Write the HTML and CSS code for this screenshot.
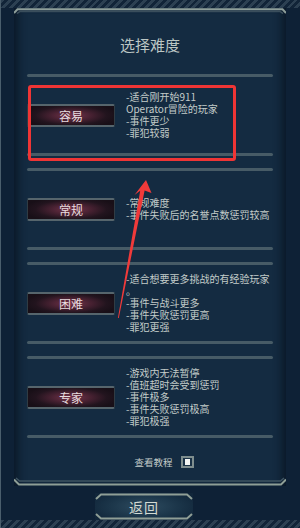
FILE: index.html
```html
<!DOCTYPE html>
<html lang="zh">
<head>
<meta charset="utf-8">
<link rel="stylesheet" href="styles.css">
</head>
<body>
<div class="screen">
  <div class="stripe"></div>
  <div class="panel">
    <svg class="frame-top" width="272" height="6" viewBox="0 0 272 6">
      <polyline points="3,5.5 6,3.5 266,3.5 269,5.5" fill="none" stroke="#3a4e5c" stroke-width="1.5"/>
      <polyline points="0,5 3.5,1.2 268.5,1.2 272,5" fill="none" stroke="#8e9e9a" stroke-width="2"/>
    </svg>
    <h1 class="title">选择难度</h1>
    <div class="modes">
      <section class="mode">
        <div class="mode-body">
          <div class="mode-btn">容易</div>
          <div class="mode-desc">-适合刚开始911<br>Operator冒险的玩家<br>-事件更少<br>-罪犯较弱</div>
        </div>
      </section>
      <section class="mode">
        <div class="mode-body">
          <div class="mode-btn">常规</div>
          <div class="mode-desc">-常规难度<br>-事件失败后的名誉点数惩罚较高</div>
        </div>
      </section>
      <section class="mode">
        <div class="mode-body">
          <div class="mode-btn">困难</div>
          <div class="mode-desc">-适合想要更多挑战的有经验玩家<br>。<br>-事件与战斗更多<br>-事件失败惩罚更高<br>-罪犯更强</div>
        </div>
      </section>
      <section class="mode">
        <div class="mode-body">
          <div class="mode-btn">专家</div>
          <div class="mode-desc">-游戏内无法暂停<br>-值班超时会受到惩罚<br>-事件极多<br>-事件失败惩罚极高<br>-罪犯极强</div>
        </div>
      </section>
    </div>
    <div class="tutorial">
      <span class="tutorial-label">查看教程</span>
      <span class="check"></span>
    </div>
    <svg class="frame-bottom" width="272" height="9" viewBox="0 0 272 9">
      <polyline points="2,1 5.5,4 266.5,4 270,1" fill="none" stroke="#3f5462" stroke-width="1.5"/>
      <polyline points="0,2.5 5,7.5 267,7.5 272,2.5" fill="none" stroke="#8e9e96" stroke-width="2"/>
    </svg>
  </div>
  <div class="back-row">
    <button class="back">
      <svg class="back-frame" width="98" height="27" viewBox="0 0 98 27">
        <polyline points="1,6 6,1.5 92,1.5 97,6" fill="none" stroke="#8f9e96" stroke-width="2"/>
        <polyline points="1,21 6,25.5 92,25.5 97,21" fill="none" stroke="#8f9e96" stroke-width="2"/>
      </svg>
      <span class="back-label">返回</span>
    </button>
  </div>
  <div class="stripe"></div>

  <div class="highlight"></div>
  <svg class="arrow" width="300" height="528" viewBox="0 0 300 528">
    <polygon points="145,180 150.5,193 143.6,190.5 117.8,318 116.9,318 139.2,190.8 133.5,195" fill="#f03a3a"/>
  </svg>
</div>
</body>
</html>
```

FILE: styles.css
```css
* { box-sizing: border-box; }

html, body {
  margin: 0;
  padding: 0;
  background: #0e2136;
}

.screen {
  position: relative;
  width: 300px;
  height: 528px;
  overflow: hidden;
  background: #0e2136;
  border-left: 1px solid #4a5e6c;
  display: flex;
  flex-direction: column;
  font-family: "Noto Sans CJK SC", "Noto Sans", sans-serif;
}

.stripe {
  height: 8px;
  flex: none;
  background: repeating-linear-gradient(135deg, #2c4052 0 2.8px, #112438 2.8px 5.6px);
}

.panel {
  flex: none;
  height: 478px;
  margin: 0 13px;
  width: 272px;
  background: #142b41;
  box-shadow: inset 8px 0 8px -4px rgba(6, 16, 28, 0.7), inset -8px 0 8px -4px rgba(6, 16, 28, 0.7);
  display: flex;
  flex-direction: column;
}

.frame-top, .frame-bottom {
  display: block;
  flex: none;
}

.title {
  margin: 21px 0 19px;
  height: 20px;
  line-height: 20px;
  font-size: 15px;
  font-weight: normal;
  text-align: center;
  color: #bcc6c4;
}

.modes {
  padding: 0 13px;
  display: flex;
  flex-direction: column;
  gap: 12px;
}

.mode::before,
.mode::after {
  content: "";
  display: block;
  height: 3px;
  border-radius: 2px;
  background: #475b66;
}

.mode-body {
  height: 76px;
  display: flex;
  align-items: center;
  gap: 11px;
}

.mode-btn {
  flex: none;
  width: 88px;
  height: 23px;
  display: flex;
  align-items: center;
  justify-content: center;
  font-size: 12px;
  color: #e8dcdf;
  border: 1px solid #303c44;
  border-top: 2px solid #56656c;
  border-bottom: 2px solid #56656c;
  border-radius: 2px;
  background: radial-gradient(ellipse 55% 65% at 50% 50%, #76354b 0%, #4a2233 40%, #22141e 75%, #180f17 100%);
}

.mode-desc {
  width: 152px;
  font-size: 10px;
  line-height: 12px;
  color: #c3cbc9;
  white-space: nowrap;
}

.tutorial {
  margin-top: 17px;
  height: 14px;
  display: flex;
  align-items: center;
  justify-content: center;
  gap: 8px;
  padding-left: 28px;
}

.tutorial-label {
  font-size: 9.5px;
  color: #c3cbc9;
}

.check {
  position: relative;
  width: 13px;
  height: 12px;
  border: 2px solid #7f8e8e;
  background: #1b3246;
}

.check::after {
  content: "";
  position: absolute;
  left: 2px;
  top: 1px;
  width: 5px;
  height: 6px;
  background: #f4f6f4;
}

.frame-bottom {
  margin-top: 8px;
}

.back-row {
  flex: none;
  margin-top: 7px;
  height: 27px;
  padding-left: 94px;
}

.back {
  position: relative;
  width: 98px;
  height: 27px;
  padding: 0;
  border: none;
  background: radial-gradient(ellipse 60% 70% at 50% 50%, #2e4c60 0%, #1b3549 60%, #11263a 100%);
  font-family: "Noto Sans CJK SC", "Noto Sans", sans-serif;
  font-size: 14px;
  color: #d3dbd3;
  display: flex;
  align-items: center;
  justify-content: center;
}

.back-frame {
  position: absolute;
  left: 0;
  top: 0;
}

.back-label {
  position: relative;
  letter-spacing: 1px;
}

.highlight {
  position: absolute;
  left: 27px;
  top: 85px;
  width: 208px;
  height: 76px;
  border: 3px solid #ef3535;
  border-radius: 3px;
}

.arrow {
  position: absolute;
  left: 0;
  top: 0;
  pointer-events: none;
}
```
